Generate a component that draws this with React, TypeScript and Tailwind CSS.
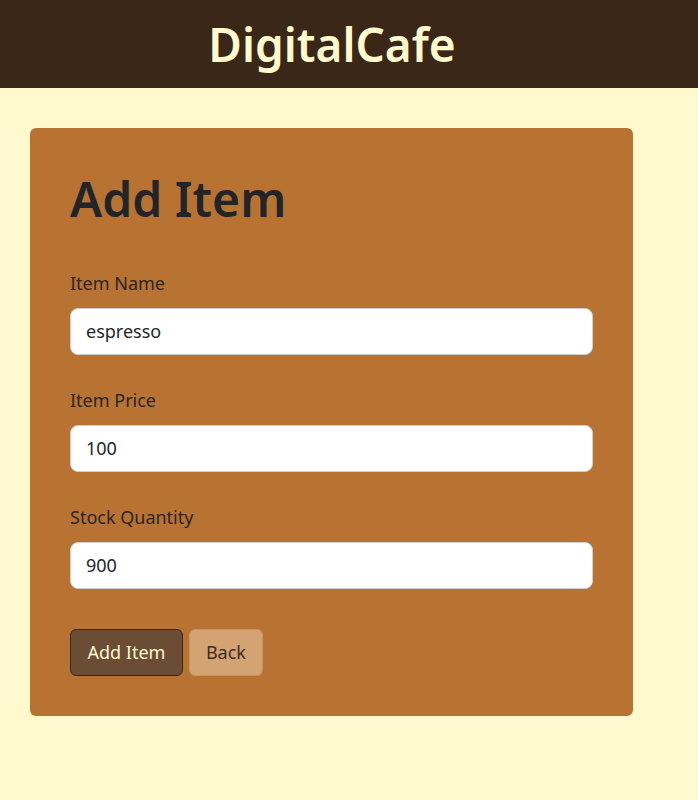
import React, { useState } from 'react';

export default function App() {
  const [name, setName] = useState('espresso');
  const [price, setPrice] = useState('100');
  const [qty, setQty] = useState('900');

  const fields = [
    { label: 'Item Name', value: name, set: setName },
    { label: 'Item Price', value: price, set: setPrice },
    { label: 'Stock Quantity', value: qty, set: setQty },
  ];

  return (
    <div className="min-h-[800px] bg-[#fffacd] font-['Noto_Sans',sans-serif]">
      <header className="h-[88px] bg-[#3b2718] flex items-center justify-center pr-[34px]">
        <h1 className="text-[46px] font-semibold text-[#fffacd] leading-none">DigitalCafe</h1>
      </header>
      <main className="pt-10 pl-[30px]">
        <div className="w-[603px] bg-[#b87333] rounded-md px-10 pt-[42px] pb-10">
          <h2 className="text-[48px] font-semibold text-[#212529] leading-[1.2] mb-[42px]">Add Item</h2>
          {fields.map((f) => (
            <div key={f.label} className="mb-[32px]">
              <label className="block text-[18px] text-[#2a2520] leading-[27px] mb-[11px]">{f.label}</label>
              <input
                value={f.value}
                onChange={(e) => f.set(e.target.value)}
                className="w-[523px] h-[47px] bg-white border border-[#cfcfcf] rounded-lg px-[15px] text-[18px] text-[#212529] outline-none"
              />
            </div>
          ))}
          <div className="flex gap-[6px] pt-[8px]">
            <button className="h-[47px] px-[16.5px] bg-[#6b4c35] border border-[#3b2718] rounded-md text-[18px] text-[#fffacd]">Add Item</button>
            <button className="h-[47px] px-[16px] bg-[#d4a373] border border-[#c7935f] rounded-md text-[18px] text-[#3a2e24]">Back</button>
          </div>
        </div>
      </main>
    </div>
  );
}
